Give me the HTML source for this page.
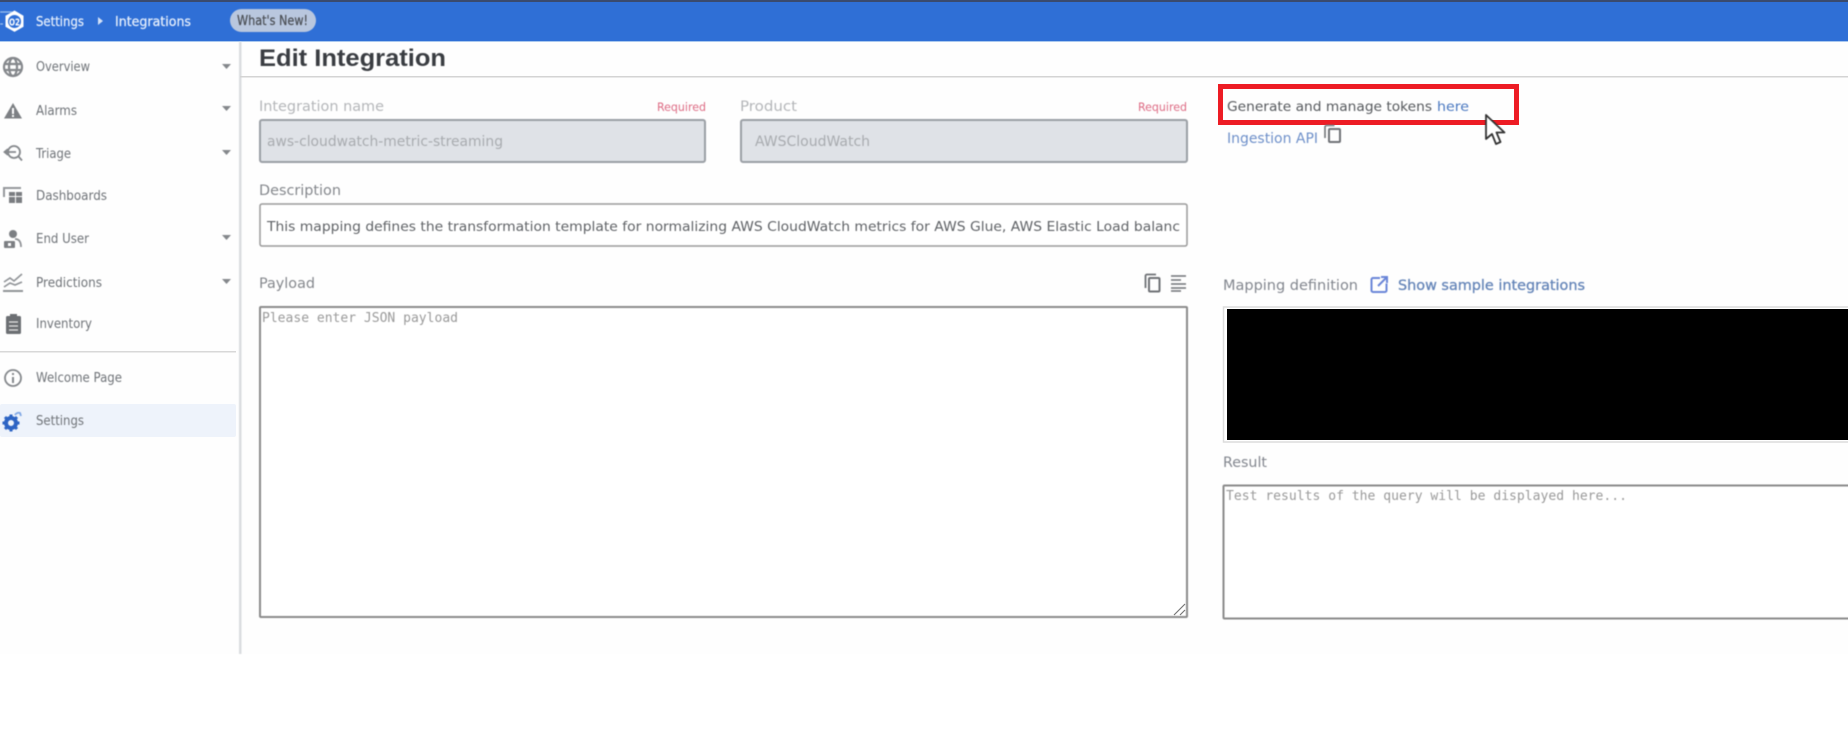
<!DOCTYPE html>
<html lang="en">
<head>
<meta charset="utf-8">
<title>Edit Integration</title>
<style>
html,body{margin:0;padding:0;background:#fff;width:1848px;height:732px;overflow:hidden}
svg{display:block;position:absolute;left:0;top:0}
text{font-family:"DejaVu Sans","Liberation Sans",sans-serif}
.b{filter:blur(.45px)}
.nav{font-size:13px;fill:#6f7378}
.lbl{font-size:14.5px;fill:#85888d}
.mono{font-family:"DejaVu Sans Mono","Liberation Mono",monospace;font-size:13px;fill:#9a9a9a}
.req{font-size:11.5px;fill:#dd6a83}
.title{font-family:"Liberation Sans",sans-serif;font-size:24.5px;font-weight:700;fill:#3a3d42}
</style>
</head>
<body>
<svg width="1848" height="732" viewBox="0 0 1848 732" xmlns="http://www.w3.org/2000/svg">
<rect width="1848" height="654" fill="#fefefe"/>
<!-- top bar -->
<rect width="1848" height="2" fill="#3a4a6e"/>
<rect y="2" width="1848" height="39" fill="#2f6fd6"/>
<rect y="41" width="1848" height="1" fill="#a9c8ef"/>
<g class="b">
<path d="M14.500 10.500l9 5.200v11l-9 5.200-9-5.200v-11z" fill="#fff"/>
<path d="M0 12h12M0 24h3" stroke="#9cc0ee" stroke-width="1.200" fill="none"/>
<circle cx="14.500" cy="21.500" r="6.500" fill="#2f6fd6"/>
<text x="9" y="25.500" font-size="9.500" font-weight="700" fill="#fff" textLength="11" lengthAdjust="spacingAndGlyphs">O2</text>
<text x="36" y="26" font-size="13.500" fill="#e6effc" stroke="#e6effc" stroke-width=".25" textLength="48" lengthAdjust="spacingAndGlyphs">Settings</text>
<path d="M98 17l5 4-5 4z" fill="#d3e1f7"/>
<text x="115" y="26" font-size="13.500" fill="#e6effc" stroke="#e6effc" stroke-width=".25" textLength="76" lengthAdjust="spacingAndGlyphs">Integrations</text>
<rect x="230" y="9" width="86" height="23" rx="11.500" fill="#b9c7de"/>
<text x="237" y="25" font-size="13" fill="#4b4f55" stroke="#4b4f55" stroke-width=".25" textLength="71" lengthAdjust="spacingAndGlyphs">What's New!</text>
</g>

<!-- sidebar -->
<rect class="b" x="239" y="42" width="2.500" height="612" fill="#dadde0"/>
<rect x="0" y="351" width="236" height="1.500" fill="#d8d8d8"/>
<rect x="0" y="404" width="236" height="33" rx="2" fill="#eef3fb"/>
<g class="b">
<text class="nav" x="36" y="71" textLength="54" lengthAdjust="spacingAndGlyphs">Overview</text>
<text class="nav" x="36" y="115" textLength="41" lengthAdjust="spacingAndGlyphs">Alarms</text>
<text class="nav" x="36" y="158" textLength="35" lengthAdjust="spacingAndGlyphs">Triage</text>
<text class="nav" x="36" y="200" textLength="71" lengthAdjust="spacingAndGlyphs">Dashboards</text>
<text class="nav" x="36" y="243" textLength="53" lengthAdjust="spacingAndGlyphs">End User</text>
<text class="nav" x="36" y="287" textLength="66" lengthAdjust="spacingAndGlyphs">Predictions</text>
<text class="nav" x="36" y="328" textLength="56" lengthAdjust="spacingAndGlyphs">Inventory</text>
<text class="nav" x="36" y="382" textLength="86" lengthAdjust="spacingAndGlyphs">Welcome Page</text>
<text class="nav" x="36" y="425" textLength="48" lengthAdjust="spacingAndGlyphs">Settings</text>
<!-- arrows -->
<g fill="#85888c">
<path d="M222 64h9l-4.500 5z"/>
<path d="M222 106h9l-4.500 5z"/>
<path d="M222 150h9l-4.500 5z"/>
<path d="M222 235h9l-4.500 5z"/>
<path d="M222 279h9l-4.500 5z"/>
</g>
<!-- overview globe -->
<g fill="none" stroke="#85888c" stroke-width="2.200">
<circle cx="13" cy="67" r="9"/>
<ellipse cx="13" cy="67" rx="4" ry="9"/>
<path d="M4 64h18M4 70h18"/>
</g>
<!-- alarm -->
<path d="M13 103l9 15.500H4z" fill="#7d8084"/>
<rect x="12" y="108" width="2" height="6" fill="#fff"/>
<rect x="12" y="115" width="2" height="2" fill="#fff"/>
<!-- triage -->
<g fill="none" stroke="#85888c" stroke-width="1.800">
<circle cx="14" cy="152" r="6"/>
<path d="M18.500 156.500l3.500 4M4 152h12M8 149l-3.500 3 3.500 3"/>
</g>
<!-- dashboards -->
<path d="M4 197v-9h17" fill="none" stroke="#95989c" stroke-width="2"/>
<g fill="#7a7d81">
<rect x="9" y="192" width="6" height="4"/>
<rect x="16" y="192" width="6" height="4"/>
<rect x="9" y="197" width="6" height="6"/>
<rect x="16" y="197" width="6" height="6"/>
</g>
<!-- end user -->
<circle cx="13" cy="234" r="4" fill="#7c7f83"/>
<rect x="4" y="241" width="11" height="7" rx="1" fill="#7c7f83"/>
<rect x="8" y="243" width="3" height="3" fill="#fff"/>
<path d="M15 239c4 0 6 3 6 8" fill="none" stroke="#909397" stroke-width="1.800"/>
<!-- predictions -->
<g fill="none" stroke="#909397" stroke-width="1.600">
<path d="M4 282l6-4 4 3 8-7M4 287l6-4 5 2 7-3"/>
<path d="M3 291h20" stroke-width="2"/>
</g>
<!-- inventory -->
<rect x="6" y="316" width="15" height="18" rx="1.500" fill="#6c6f73"/>
<rect x="10" y="314" width="7" height="4" fill="#6c6f73"/>
<path d="M9 322h9M9 326h9M9 330h9" stroke="#e5e5e5" stroke-width="1.200"/>
<!-- welcome info -->
<circle cx="13" cy="378" r="8" fill="none" stroke="#85888c" stroke-width="1.800"/>
<rect x="12" y="377" width="2" height="6" fill="#85888c"/>
<rect x="12" y="373" width="2" height="2" fill="#85888c"/>
<!-- settings gear -->
<g transform="translate(11 423)">
<circle r="5" fill="none" stroke="#2d64c4" stroke-width="4"/>
<g stroke="#2d64c4" stroke-width="3">
<path d="M0-8.500V-6M0 6V8.500M-8.500 0H-6M6 0H8.500M-6-6l2 2M4 4l2 2M6-6l-2 2M-4 4l-2 2"/>
</g>
</g>
<path d="M15 415a4 4 0 0 1 5-2l1 3" fill="none" stroke="#7ea6e4" stroke-width="1.800"/>
</g>

<!-- heading -->
<rect x="240" y="76" width="1608" height="1.500" fill="#d4d4d4"/>
<text class="b title" x="259" y="66" textLength="187" lengthAdjust="spacingAndGlyphs">Edit Integration</text>

<!-- integration name -->
<text class="b" x="259" y="111" font-size="14.500" fill="#b4b6b9" textLength="125" lengthAdjust="spacingAndGlyphs">Integration name</text>
<text class="b req" x="657" y="111" textLength="49" lengthAdjust="spacingAndGlyphs">Required</text>
<rect class="b" x="260" y="120" width="445" height="42" rx="2" fill="#dfe2e7" stroke="#9a9fa5" stroke-width="2"/>
<text class="b" x="267" y="146" font-size="14" fill="#a8abaf" textLength="236" lengthAdjust="spacingAndGlyphs">aws-cloudwatch-metric-streaming</text>

<!-- product -->
<text class="b" x="740" y="111" font-size="14.500" fill="#b4b6b9" textLength="57" lengthAdjust="spacingAndGlyphs">Product</text>
<text class="b req" x="1138" y="111" textLength="49" lengthAdjust="spacingAndGlyphs">Required</text>
<rect class="b" x="741" y="120" width="446" height="42" rx="2" fill="#dfe2e7" stroke="#9a9fa5" stroke-width="2"/>
<text class="b" x="755" y="146" font-size="14" fill="#a8abaf" textLength="115" lengthAdjust="spacingAndGlyphs">AWSCloudWatch</text>

<!-- description -->
<text class="b lbl" x="259" y="195" textLength="82" lengthAdjust="spacingAndGlyphs">Description</text>
<rect class="b" x="260" y="204" width="927" height="42" rx="2" fill="#fff" stroke="#999" stroke-width="1.500"/>
<text class="b" x="267" y="231" font-size="13.500" fill="#5f6266" textLength="913" lengthAdjust="spacingAndGlyphs">This mapping defines the transformation template for normalizing AWS CloudWatch metrics for AWS Glue, AWS Elastic Load balanc</text>

<!-- payload -->
<text class="b lbl" x="259" y="288" textLength="56" lengthAdjust="spacingAndGlyphs">Payload</text>
<g class="b" fill="none" stroke="#6f7276">
<path d="M1145.500 288v-12a1.500 1.500 0 0 1 1.500-1.500h9" stroke-width="1.800"/>
<rect x="1149" y="278" width="10.500" height="13.500" rx="1" stroke-width="2"/>
<path d="M1171 276h15M1171 280h10M1171 284h15M1171 288h15M1171 291h10" stroke-width="1.600"/>
</g>
<rect class="b" x="260" y="307" width="927" height="310" rx="1" fill="#fff" stroke="#8b8b8b" stroke-width="2"/>
<text class="b mono" x="262" y="322" textLength="196" lengthAdjust="spacingAndGlyphs">Please enter JSON payload</text>
<path d="M1174 615l11-11M1180 615l5-5" stroke="#777" stroke-width="1.200" fill="none"/>

<!-- right column -->
<text class="b" x="1227" y="111" font-size="13.500" fill="#55585c" textLength="205" lengthAdjust="spacingAndGlyphs">Generate and manage tokens</text>
<text class="b" x="1437" y="111" font-size="13.500" fill="#4a78c0" textLength="32" lengthAdjust="spacingAndGlyphs">here</text>
<rect x="1220.500" y="86.500" width="296" height="36" fill="none" stroke="#ed1c24" stroke-width="5"/>
<text class="b" x="1227" y="143" font-size="14" fill="#6d8fc9" textLength="91" lengthAdjust="spacingAndGlyphs">Ingestion API</text>
<g class="b" fill="none" stroke="#6f7276">
<path d="M1325 138v-11a1.500 1.500 0 0 1 1.500-1.500h8" stroke-width="1.600"/>
<rect x="1329" y="129" width="11" height="13" rx="1" stroke-width="2"/>
</g>
<path class="b" d="M1486 115v24l6-5 4 10 4.500-2-4-9.500 8 0z" fill="#fff" stroke="#333" stroke-width="1.800" stroke-linejoin="round"/>

<text class="b" x="1223" y="290" font-size="14.500" fill="#82868e" textLength="135" lengthAdjust="spacingAndGlyphs">Mapping definition</text>
<g class="b" fill="none" stroke="#6a86d8" stroke-width="2">
<path d="M1380 278h-7a1.500 1.500 0 0 0-1.500 1.500v11a1.500 1.500 0 0 0 1.500 1.500h12a1.500 1.500 0 0 0 1.500-1.500v-7"/>
<path d="M1378 286l9-9M1381 277h6v6"/>
</g>
<text class="b" x="1398" y="290" font-size="14.500" fill="#6585b8" stroke="#6585b8" stroke-width=".3" textLength="187" lengthAdjust="spacingAndGlyphs">Show sample integrations</text>

<rect x="1223.500" y="307" width="640" height="135" fill="#fff" stroke="#dcdcdc" stroke-width="1.500"/>
<rect x="1227" y="309" width="621" height="131" fill="#000"/>

<text class="b" x="1223" y="467" font-size="14.500" fill="#82868e" textLength="44" lengthAdjust="spacingAndGlyphs">Result</text>
<rect class="b" x="1223.500" y="485.500" width="640" height="133" rx="1" fill="#fff" stroke="#8b8b8b" stroke-width="2"/>
<text class="b mono" x="1226" y="500" textLength="401" lengthAdjust="spacingAndGlyphs">Test results of the query will be displayed here...</text>
</svg>
</body>
</html>
